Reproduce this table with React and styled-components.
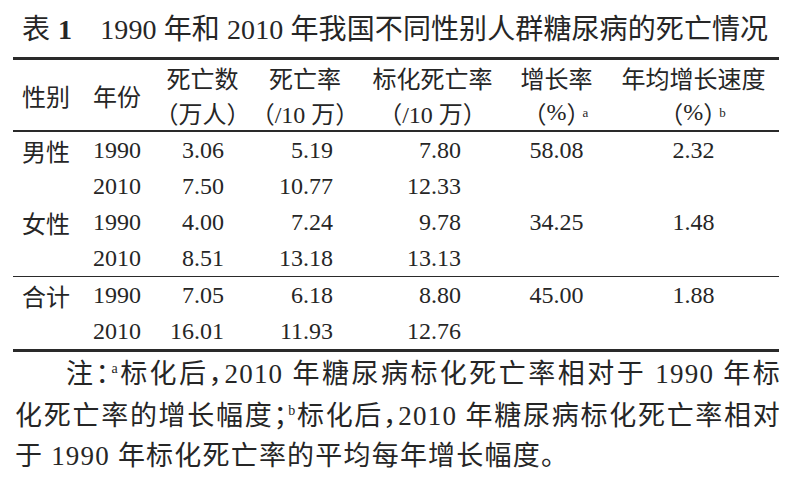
import React from 'react';
import styled, { createGlobalStyle } from 'styled-components';

const GlobalStyle = createGlobalStyle`
  html, body {
    margin: 0;
    padding: 0;
    background: #fff;
  }
  body {
    font-family: "Liberation Serif", "Noto Sans CJK SC", serif;
    color: #262626;
  }
`;

const COLS = '69px 73px 95px 110px 145px 103px 171px';

const Page = styled.div`
  width: 794px;
  height: 482px;
  overflow: hidden;
  background: #fff;
`;

const Title = styled.h1`
  margin: 12px 0 9px 22px;
  font-size: 28px;
  line-height: 36px;
  font-weight: 400;
  letter-spacing: 0.1px;
  white-space: nowrap;
`;

const TitleNo = styled.span`
  font-weight: 700;
  margin-left: 8px;
  margin-right: 28px;
`;

const Table = styled.div`
  margin-left: 13px;
  width: 766px;
  border-top: 3px solid #2a2a2a;
  border-bottom: 3px solid #2a2a2a;
  font-size: 24px;
`;

const Head = styled.div`
  display: grid;
  grid-template-columns: ${COLS};
  grid-template-rows: 35px 35px;
  border-bottom: 2px solid #2a2a2a;
`;

const HeadCell = styled.div`
  display: flex;
  align-items: center;
  justify-content: ${(p) => (p.$left ? 'flex-start' : 'center')};
  padding-left: ${(p) => p.$pad || 0}px;
  grid-row: ${(p) => (p.$span ? '1 / span 2' : 'auto')};
  white-space: nowrap;
`;

// half-width CJK punctuation, as in the printed table
const Punct = styled.span`
  font-family: "Noto Sans CJK SC", sans-serif;
  font-feature-settings: "halt";
`;

const Sup = styled.sup`
  font-size: 13px;
  line-height: 0;
  margin-left: 4px;
  margin-right: -10px;
  vertical-align: 8px;
`;

const Group = styled.div`
  border-bottom: ${(p) => (p.$rule ? '1.5px solid #2a2a2a' : 'none')};
`;

const Row = styled.div`
  display: grid;
  grid-template-columns: ${COLS};
  height: 36px;
  align-items: center;
  white-space: nowrap;
`;

const Cell = styled.div`
  text-align: ${(p) => p.$align || 'left'};
  padding-left: ${(p) => p.$pl || 0}px;
  padding-right: ${(p) => p.$pr || 0}px;
`;

const Notes = styled.div`
  width: 766px;
  margin-left: 15px;
  font-size: 27px;
  line-height: 40px;
  letter-spacing: 1.2px;
`;

const NoteLine = styled.div`
  text-align: ${(p) => (p.$justify ? 'justify' : 'left')};
  text-align-last: ${(p) => (p.$justify ? 'justify' : 'auto')};
  padding-left: ${(p) => (p.$indent ? 51 : 0)}px;
  white-space: ${(p) => (p.$justify ? 'normal' : 'nowrap')};
`;

const NoteSup = styled.sup`
  font-size: 14px;
  line-height: 0;
  vertical-align: 10px;
`;

const groups = [
  {
    rule: true,
    rows: [
      ['男性', '1990', '3.06', '5.19', '7.80', '58.08', '2.32'],
      ['', '2010', '7.50', '10.77', '12.33', '', ''],
      ['女性', '1990', '4.00', '7.24', '9.78', '34.25', '1.48'],
      ['', '2010', '8.51', '13.18', '13.13', '', ''],
    ],
  },
  {
    rule: false,
    rows: [
      ['合计', '1990', '7.05', '6.18', '8.80', '45.00', '1.88'],
      ['', '2010', '16.01', '11.93', '12.76', '', ''],
    ],
  },
];

function DataRow({ cells }) {
  const [sex, year, num, rate, std, growth, yearly] = cells;
  return (
    <Row>
      <Cell $pl={9}>{sex}</Cell>
      <Cell $pl={11}>{year}</Cell>
      <Cell $align="right" $pr={26}>{num}</Cell>
      <Cell $align="right" $pr={27}>{rate}</Cell>
      <Cell $align="right" $pr={44}>{std}</Cell>
      <Cell $align="center">{growth}</Cell>
      <Cell $align="center">{yearly}</Cell>
    </Row>
  );
}

function Paren({ children }) {
  return (
    <>
      <Punct>（</Punct>
      {children}
      <Punct>）</Punct>
    </>
  );
}

export default function App() {
  return (
    <Page>
      <GlobalStyle />
      <Title>
        表<TitleNo>1</TitleNo>1990 年和 2010 年我国不同性别人群糖尿病的死亡情况
      </Title>
      <Table>
        <Head>
          <HeadCell $span $left $pad={9}>性别</HeadCell>
          <HeadCell $span $left $pad={11}>年份</HeadCell>
          <HeadCell>死亡数</HeadCell>
          <HeadCell>死亡率</HeadCell>
          <HeadCell>标化死亡率</HeadCell>
          <HeadCell>增长率</HeadCell>
          <HeadCell>年均增长速度</HeadCell>
          <HeadCell><Paren>万人</Paren></HeadCell>
          <HeadCell><Paren>/10 万</Paren></HeadCell>
          <HeadCell><Paren>/10 万</Paren></HeadCell>
          <HeadCell><Paren>%</Paren><Sup>a</Sup></HeadCell>
          <HeadCell><Paren>%</Paren><Sup>b</Sup></HeadCell>
        </Head>
        {groups.map((g, i) => (
          <Group key={i} $rule={g.rule}>
            {g.rows.map((r, j) => (
              <DataRow key={j} cells={r} />
            ))}
          </Group>
        ))}
      </Table>
      <Notes>
        <NoteLine $justify $indent>
          注<Punct>：</Punct><NoteSup>a</NoteSup>标化后<Punct>，</Punct>2010 年糖尿病标化死亡率相对于 1990 年标
        </NoteLine>
        <NoteLine $justify>
          化死亡率的增长幅度<Punct>；</Punct><NoteSup>b</NoteSup>标化后<Punct>，</Punct>2010 年糖尿病标化死亡率相对
        </NoteLine>
        <NoteLine>于 1990 年标化死亡率的平均每年增长幅度。</NoteLine>
      </Notes>
    </Page>
  );
}
